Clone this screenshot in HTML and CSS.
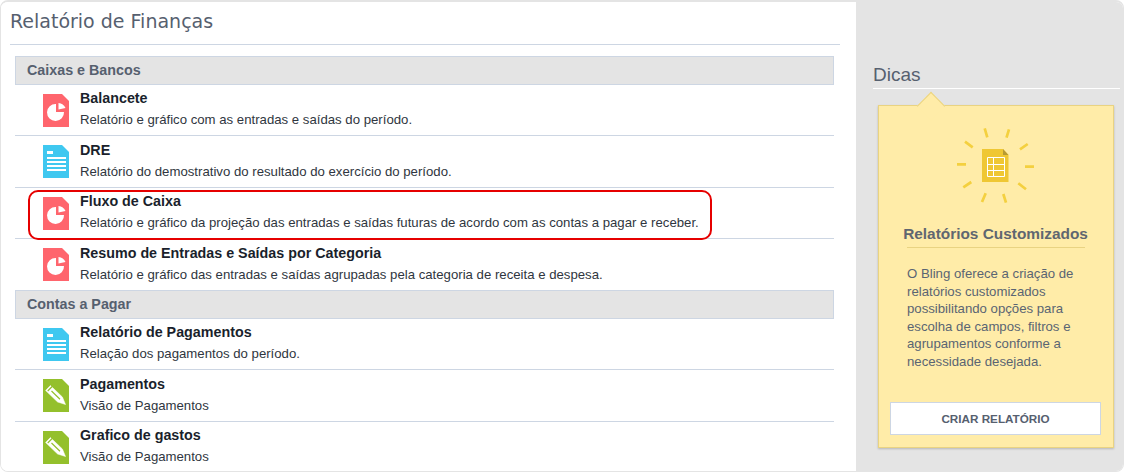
FILE: index.html
```html
<!DOCTYPE html>
<html lang="pt-BR">
<head>
<meta charset="utf-8">
<title>Relatório de Finanças</title>
<link rel="stylesheet" href="styles.css">
</head>
<body>
<svg class="defs" width="0" height="0" aria-hidden="true">
  <defs>
    <symbol id="i-pie" viewBox="0 0 26 33">
      <path d="M0 0H19L26 7V33H0Z" fill="#ff656d"/>
      <path d="M13.5 9.500V17.500H21.500A8.500 8.500 0 1 1 13.500 9.500Z" fill="#fff" transform="translate(-.5 .5)"/>
      <path d="M15 9.500A8.500 8.500 0 0 1 22 14.500L15 16Z" fill="#fff" transform="translate(.5 -.5)"/>
    </symbol>
    <symbol id="i-doc" viewBox="0 0 26 33">
      <path d="M0 0H19L26 7V33H0Z" fill="#3fc8f0"/>
      <path d="M4 6H10V9H4ZM4 12H23V14H4ZM4 16H23V18H4ZM4 20H23V22H4ZM4 24H23V26H4Z" fill="#fff"/>
    </symbol>
    <symbol id="i-pen" viewBox="0 0 26 33">
      <path d="M0 0H19L26 7V33H0Z" fill="#94c02c"/>
      <path d="M7.400 6.500 19.400 18 22.500 25.500 14.600 23 2.600 11.500Z" fill="#fff" stroke="#fff" stroke-width=".5" stroke-linejoin="round"/>
      <path d="M8.500 12 17 20.200M4.700 12 9.200 7.500" stroke="#94c02c" stroke-width="1.200" fill="none"/>
    </symbol>
  </defs>
</svg>
<div class="panel">
  <main class="main">
    <h1 class="page-title">Relatório de Finanças</h1>
    <section class="group">
      <h2 class="group-head">Caixas e Bancos</h2>
      <a class="row"><svg class="icon"><use href="#i-pie"/></svg><div class="row-text"><strong>Balancete</strong><span>Relatório e gráfico com as entradas e saídas do período.</span></div></a>
      <a class="row"><svg class="icon"><use href="#i-doc"/></svg><div class="row-text"><strong>DRE</strong><span>Relatório do demostrativo do resultado do exercício do período.</span></div></a>
      <a class="row highlighted"><svg class="icon"><use href="#i-pie"/></svg><div class="row-text"><strong>Fluxo de Caixa</strong><span>Relatório e gráfico da projeção das entradas e saídas futuras de acordo com as contas a pagar e receber.</span></div></a>
      <a class="row last"><svg class="icon"><use href="#i-pie"/></svg><div class="row-text"><strong>Resumo de Entradas e Saídas por Categoria</strong><span>Relatório e gráfico das entradas e saídas agrupadas pela categoria de receita e despesa.</span></div></a>
    </section>
    <section class="group">
      <h2 class="group-head">Contas a Pagar</h2>
      <a class="row"><svg class="icon"><use href="#i-doc"/></svg><div class="row-text"><strong>Relatório de Pagamentos</strong><span>Relação dos pagamentos do período.</span></div></a>
      <a class="row"><svg class="icon"><use href="#i-pen"/></svg><div class="row-text"><strong>Pagamentos</strong><span>Visão de Pagamentos</span></div></a>
      <a class="row last"><svg class="icon"><use href="#i-pen"/></svg><div class="row-text"><strong>Grafico de gastos</strong><span>Visão de Pagamentos</span></div></a>
    </section>
  </main>
  <aside class="side">
    <h2 class="side-title">Dicas</h2>
    <div class="tip">
      <svg class="tip-art" width="90" height="86" viewBox="0 0 90 86" aria-hidden="true">
        <path d="M34.700 8.300 37.300 17.300M59 9.300 56.500 17.700M15 21.700 22.700 27.300M70 29.300 77.700 24M7 44.300H16M75 46.700H84M13.300 67.300 21.300 62M68.300 63.300 76 69.300M35.700 73.300 32 82M53.300 74 56 82.700" stroke="#f4d03f" stroke-width="2.700" fill="none"/>
        <path d="M32 29H53L58.500 35V62H32Z" fill="#efc733"/>
        <path d="M53 29 58.500 35H53Z" fill="#b79a33"/>
        <path d="M37.500 37.500H54.500V56.500H37.500ZM37.500 44.500H54.500M37.500 50.500H54.500M43.500 37.500V56.500" fill="none" stroke="#fff" stroke-width="1"/>
      </svg>
      <h3 class="tip-title">Relatórios Customizados</h3>
      <p class="tip-text">O Bling oferece a criação de relatórios customizados possibilitando opções para escolha de campos, filtros e agrupamentos conforme a necessidade desejada.</p>
      <a class="tip-button">CRIAR RELATÓRIO</a>
    </div>
  </aside>
</div>
</body>
</html>
```

FILE: styles.css
```css
* { box-sizing: border-box; }
html, body { margin: 0; padding: 0; background: #fff; }
body { width: 1124px; height: 472px; overflow: hidden; font-family: "Liberation Sans", Arial, sans-serif; }
.defs { position: absolute; }
.panel {
  display: flex;
  height: 472px;
  border: 1px solid #e4e4e4;
  border-top-width: 2px;
  border-radius: 8px;
  overflow: hidden;
}
.main { width: 855px; padding: 0 16px 0 9px; background: #fff; }
.page-title {
  margin: 0;
  height: 43px;
  padding-top: 7px;
  border-bottom: 1px solid #cdd6e3;
  font: 400 19px/24px "DejaVu Sans", sans-serif;
  color: #56606f;
}
.group { margin-left: 5px; margin-right: 6px; }
.group:first-of-type { margin-top: 11.2px; }
.group-head {
  margin: 0;
  height: 28.4px;
  padding-left: 11px;
  background: #e4e4e4;
  border: 1px solid #cdd6e3;
  font: 700 14.3px/27px "Liberation Sans", Arial, sans-serif;
  color: #56606f;
}
.row {
  position: relative;
  display: flex;
  height: 51.47px;
  padding: 9px 0 0 28px;
  border-bottom: 1px solid #cdd6e3;
  color: #1f2430;
}
.row.last { border-bottom: 0; }
.row.highlighted::after {
  content: "";
  position: absolute;
  left: 13px;
  right: 122px;
  top: 2.5px;
  height: 46px;
  border: 2px solid #e60000;
  border-radius: 10px;
}
.icon { width: 26px; height: 33px; flex: none; }
.row-text { margin-left: 11px; margin-top: -4.38px; display: flex; flex-direction: column; }
.row-text strong { font-size: 14.3px; line-height: 18px; font-weight: 700; color: #1a1f2c; }
.row-text span { margin-top: 4px; font-size: 13.2px; line-height: 18px; color: #2f3640; }
.side { flex: 1; min-width: 0; padding: 60px 3px 0 17px; background: #e4e4e4; }
.side-title {
  margin: 0;
  height: 27px;
  border-bottom: 1px solid #fff;
  font: 400 19px/25px "Liberation Sans", Arial, sans-serif;
  color: #56606f;
}
.tip {
  position: relative;
  display: flex;
  flex-direction: column;
  width: 236px;
  height: 343px;
  margin: 16px 0 0 5px;
  padding: 12px 12px 12px 11px;
  background: #ffeca8;
  border: 1px solid #e9d382;
  box-shadow: 0 1px 2px rgba(0,0,0,.2);
}
.tip::before {
  content: "";
  position: absolute;
  left: 42px;
  top: -10px;
  width: 19px;
  height: 19px;
  background: #ffeca8;
  border: 1px solid #e9d382;
  border-right: 0;
  border-bottom: 0;
  transform: rotate(45deg);
}
.tip-art { display: block; margin: 2px 0 0 60px; flex: none; position: relative; }
.tip-title {
  display: flex;
  justify-content: center;
  margin: 19px 16px 0 17px;
  padding: 0 1px 4px 0;
  border-bottom: 1px solid #e9d382;
  font: 700 15.4px/18px "Liberation Sans", Arial, sans-serif;
  color: #5f6670;
  white-space: nowrap;
}
.tip-text { margin: 17px 16px 0 17px; font-size: 13.2px; line-height: 17.6px; color: #5a6573; }
.tip-button {
  display: block;
  margin-top: auto;
  height: 33px;
  background: #fff;
  border: 1px solid #cdd6e3;
  font: 700 11.7px/31px "Liberation Sans", Arial, sans-serif;
  color: #56606f;
  text-align: center;
}
```
